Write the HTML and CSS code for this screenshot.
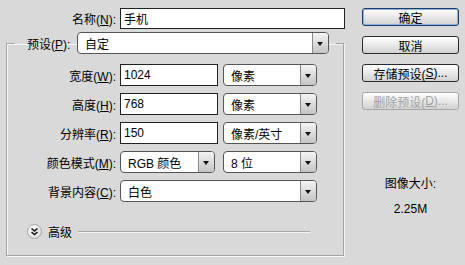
FILE: index.html
```html
<!DOCTYPE html>
<html lang="zh-CN">
<head>
<meta charset="utf-8">
<title>新建</title>
<link rel="stylesheet" href="styles.css">
</head>
<body>
<div class="dialog">
  <div class="main">
    <div class="row name-row">
      <label class="lbl">名称(<u>N</u>):</label>
      <div class="field text name-field">手机</div>
    </div>
    <fieldset class="group">
      <legend class="preset">
        <span class="preset-lbl">预设(<u>P</u>):</span>
        <div class="field select preset-sel"><span class="val">自定</span><span class="arrow"></span></div>
      </legend>
      <div class="row first">
        <label class="lbl">宽度(<u>W</u>):</label>
        <div class="field text num">1024</div>
        <div class="field select unit"><span class="val">像素</span><span class="arrow"></span></div>
      </div>
      <div class="row">
        <label class="lbl">高度(<u>H</u>):</label>
        <div class="field text num">768</div>
        <div class="field select unit"><span class="val">像素</span><span class="arrow"></span></div>
      </div>
      <div class="row">
        <label class="lbl">分辨率(<u>R</u>):</label>
        <div class="field text num">150</div>
        <div class="field select unit"><span class="val">像素/英寸</span><span class="arrow"></span></div>
      </div>
      <div class="row">
        <label class="lbl">颜色模式(<u>M</u>):</label>
        <div class="field select mode"><span class="val">RGB 颜色</span><span class="arrow"></span></div>
        <div class="field select unit bits"><span class="val">8 位</span><span class="arrow"></span></div>
      </div>
      <div class="row">
        <label class="lbl">背景内容(<u>C</u>):</label>
        <div class="field select bg"><span class="val">白色</span><span class="arrow"></span></div>
      </div>
      <div class="adv">
        <span class="adv-btn"><svg width="9" height="9" viewBox="0 0 9 9"><path d="M1.5 1.5 L4.5 4 L7.5 1.5 M1.5 5 L4.5 7.5 L7.5 5" fill="none" stroke="#111" stroke-width="1.6"/></svg></span>
        <span class="adv-lbl">高级</span>
        <span class="adv-line"></span>
      </div>
    </fieldset>
  </div>
  <div class="side">
    <div class="btn default">确定</div>
    <div class="btn">取消</div>
    <div class="btn">存储预设(<u>S</u>)...</div>
    <div class="btn disabled">删除预设(<u>D</u>)...</div>
    <div class="size-lbl">图像大小:</div>
    <div class="size-val">2.25M</div>
  </div>
</div>
</body>
</html>
```

FILE: styles.css
```css
* { box-sizing: border-box; }
html, body { margin: 0; padding: 0; background: #d9d9d9; }
body {
  width: 465px;
  height: 265px;
  overflow: hidden;
  font-family: "Liberation Sans", "Noto Sans CJK SC", sans-serif;
  font-size: 12px;
  color: #000;
}
u { text-decoration: underline; text-underline-offset: 1px; }

.dialog { display: flex; padding-top: 8px; }
.main { width: 345px; }

.row { display: flex; align-items: center; height: 22px; }
.lbl { width: 109px; text-align: right; white-space: nowrap; margin-right: 4px; }
.name-row { height: 21px; }
.name-row .lbl { width: 116px; }

.field { height: 100%; background: #fff; display: flex; align-items: center; white-space: nowrap; }
.text { border: 1px solid #222; padding-left: 3px; }
.name-field { width: 225px; }
.num { width: 98px; margin-right: 5px; }

.select { border: 1px solid #555; border-radius: 4px; overflow: hidden; }
.select .val { flex: 1; padding-left: 7px; }
.select .arrow {
  width: 16px; height: 100%;
  border-left: 1px solid #8a8a8a;
  background: linear-gradient(#f4f4f4, #c4c4c4);
  position: relative;
}
.select .arrow::after {
  content: "";
  position: absolute; left: 4px; top: 9px;
  border-left: 3.5px solid transparent;
  border-right: 3.5px solid transparent;
  border-top: 4px solid #111;
}
.unit { width: 94px; }
.mode { width: 95px; margin-right: 8px; }
.bg { width: 197px; }

.group {
  margin: 3px 0 0 6px;
  padding: 0 0 16px 0;
  width: 338px;
  min-width: 0;
  border: 1px solid #a3a3a3;
  box-shadow: 1px 1px 0 #f6f6f6, inset 1px 1px 0 #f6f6f6;
}
.preset {
  display: flex;
  align-items: center;
  height: 22px;
  margin-left: 7px;
  padding: 0 7px 0 13px;
}
.preset-lbl { width: 50px; white-space: nowrap; }
.preset-sel { width: 252px; }

.group .row { margin-top: 7px; }
.group .row.first { margin-top: 10px; }

.adv { display: flex; align-items: center; height: 15px; margin-top: 22px; }
.adv-btn {
  width: 15px; height: 15px; margin-left: 20px;
  border-radius: 50%;
  border: 1px solid #a8a8a8;
  background: radial-gradient(circle at 40% 35%, #ffffff, #d2d2d2);
  display: flex; align-items: center; justify-content: center;
}
.adv-lbl { margin-left: 6px; }
.adv-line {
  flex: 1; margin: 0 33px 0 6px;
  border-top: 1px solid #a8a8a8;
  border-bottom: 1px solid #f4f4f4;
}

.side { margin-left: 17px; width: 97px; display: flex; flex-direction: column; align-items: stretch; }
.btn {
  height: 18px; margin-bottom: 10px;
  border: 1px solid #2a2a2a;
  border-radius: 3px;
  background: linear-gradient(#ffffff, #e6e6e6 55%, #d2d2d2);
  display: flex; align-items: center; justify-content: center;
  white-space: nowrap;
}
.btn.default { border-color: #1d3c6c; box-shadow: inset 0 0 0 1px #8fb0dc; }
.btn.disabled { color: #a2a2a2; border-color: #a6a6a6; }
.size-lbl { margin-top: 56px; text-align: center; line-height: 16px; }
.size-val { margin-top: 9px; text-align: center; line-height: 16px; }
```
